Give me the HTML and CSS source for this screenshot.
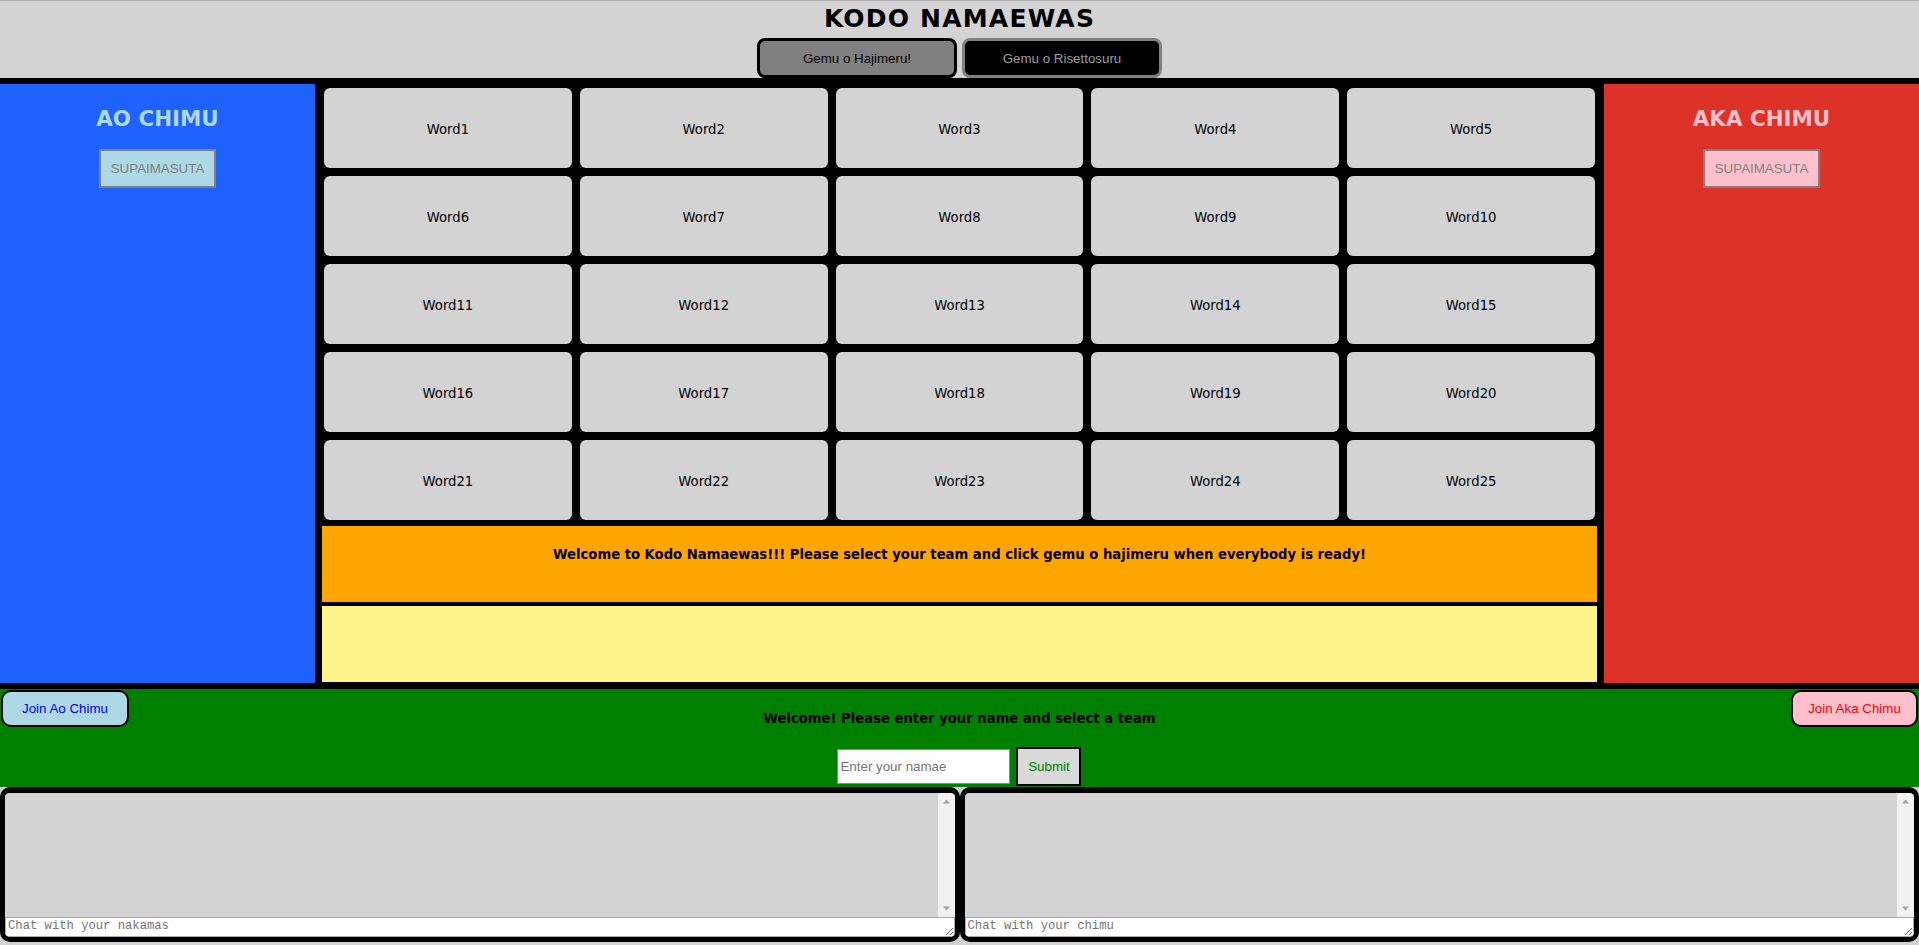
FILE: index.html
```html
<!DOCTYPE html>
<html lang="en">
<head>
<meta charset="utf-8">
<title>Kodo Namaewas</title>
<link rel="stylesheet" href="styles.css">
</head>
<body>
<header class="top-bar">
  <h1 class="title">KODO NAMAEWAS</h1>
  <div class="game-controls">
    <button class="ctrl-btn ctrl-start">Gemu o Hajimeru!</button>
    <button class="ctrl-btn ctrl-reset">Gemu o Risettosuru</button>
  </div>
</header>

<main class="board-area">
  <aside class="team team-blue">
    <h2 class="team-name">AO CHIMU</h2>
    <button class="spymaster">SUPAIMASUTA</button>
  </aside>

  <section class="center-col">
    <div class="word-grid">
      <div class="card">Word1</div>
      <div class="card">Word2</div>
      <div class="card">Word3</div>
      <div class="card">Word4</div>
      <div class="card">Word5</div>
      <div class="card">Word6</div>
      <div class="card">Word7</div>
      <div class="card">Word8</div>
      <div class="card">Word9</div>
      <div class="card">Word10</div>
      <div class="card">Word11</div>
      <div class="card">Word12</div>
      <div class="card">Word13</div>
      <div class="card">Word14</div>
      <div class="card">Word15</div>
      <div class="card">Word16</div>
      <div class="card">Word17</div>
      <div class="card">Word18</div>
      <div class="card">Word19</div>
      <div class="card">Word20</div>
      <div class="card">Word21</div>
      <div class="card">Word22</div>
      <div class="card">Word23</div>
      <div class="card">Word24</div>
      <div class="card">Word25</div>
    </div>
    <div class="message-box">Welcome to Kodo Namaewas!!! Please select your team and click gemu o hajimeru when everybody is ready!</div>
    <div class="log-box"></div>
  </section>

  <aside class="team team-red">
    <h2 class="team-name">AKA CHIMU</h2>
    <button class="spymaster">SUPAIMASUTA</button>
  </aside>
</main>

<section class="join-bar">
  <button class="join-btn join-blue">Join Ao Chimu</button>
  <div class="join-center">
    <h4 class="join-title">Welcome! Please enter your name and select a team</h4>
    <form class="name-form">
      <input class="name-input" type="text" placeholder="Enter your namae">
      <button class="submit-btn" type="button">Submit</button>
    </form>
  </div>
  <button class="join-btn join-red">Join Aka Chimu</button>
</section>

<section class="chats">
  <div class="chat-box">
    <div class="chat-log">
      <div class="chat-messages"></div>
      <div class="scroll-rail" aria-hidden="true">
        <svg width="17" height="17" viewBox="0 0 17 17"><path d="M5 10.5h7L8.5 6.5z" fill="#a3a3a3"/></svg>
        <svg width="17" height="17" viewBox="0 0 17 17"><path d="M5 6.5h7L8.5 10.5z" fill="#a3a3a3"/></svg>
      </div>
    </div>
    <textarea class="chat-input" rows="1" placeholder="Chat with your nakamas"></textarea>
  </div>
  <div class="chat-box">
    <div class="chat-log">
      <div class="chat-messages"></div>
      <div class="scroll-rail" aria-hidden="true">
        <svg width="17" height="17" viewBox="0 0 17 17"><path d="M5 10.5h7L8.5 6.5z" fill="#a3a3a3"/></svg>
        <svg width="17" height="17" viewBox="0 0 17 17"><path d="M5 6.5h7L8.5 10.5z" fill="#a3a3a3"/></svg>
      </div>
    </div>
    <textarea class="chat-input" rows="1" placeholder="Chat with your chimu"></textarea>
  </div>
</section>
</body>
</html>
```

FILE: styles.css
```css
* {
  box-sizing: border-box;
}

html, body {
  margin: 0;
  padding: 0;
}

body {
  background: #d3d3d3;
  font-family: "DejaVu Sans", sans-serif;
  overflow: hidden;
}

/* Header */
.top-bar {
  background: #d3d3d3;
  border-top: 1px solid #a9a9a9;
  padding-top: 4px;
  display: flex;
  flex-direction: column;
  align-items: center;
}

.title {
  margin: 0;
  font-size: 25px;
  line-height: 28px;
  font-weight: bold;
  letter-spacing: 1.2px;
  color: #000;
}

.game-controls {
  margin-top: 5px;
  display: flex;
  gap: 5px;
}

.ctrl-btn {
  width: 200px;
  height: 40px;
  border: 3px solid;
  border-radius: 8px;
  font-family: "Liberation Sans", Arial, sans-serif;
  font-size: 13.33px;
  padding: 0;
}

.ctrl-start {
  background: #808080;
  border-color: #000;
  color: #000;
}

.ctrl-reset {
  background: #000;
  border-color: #808080;
  color: #9a9a9a;
}

/* Board */
.board-area {
  background: #000;
  padding: 6px 0;
  display: flex;
}

.team {
  width: 315px;
  flex: none;
  height: 599px;
  display: flex;
  flex-direction: column;
  align-items: center;
  padding-top: 22px;
}

.team-blue {
  background: #1e63ff;
}

.team-red {
  background: #dd3227;
}

.team-name {
  margin: 0 0 17px;
  font-size: 21.4px;
  line-height: 26px;
  font-weight: bold;
}

.team-blue .team-name {
  color: #add8e6;
}

.team-red .team-name {
  color: #ffc0cb;
}

.spymaster {
  border: 2px solid #808080;
  padding: 10px;
  font-family: "Liberation Sans", Arial, sans-serif;
  font-size: 13.33px;
  line-height: 15px;
  color: #808080;
}

.team-blue .spymaster {
  background: #add8e6;
}

.team-red .spymaster {
  background: #ffc0cb;
}

.center-col {
  flex: 1;
  padding: 4px 7px 1px;
  display: flex;
  flex-direction: column;
}

.word-grid {
  padding: 0 2px;
  display: grid;
  grid-template-columns: repeat(5, 1fr);
  grid-auto-rows: 80px;
  gap: 8px;
}

.card {
  background: #d3d3d3;
  border-radius: 6px;
  display: flex;
  align-items: center;
  justify-content: center;
  padding-top: 2px;
  font-size: 13.2px;
  color: #000;
}

.message-box {
  margin-top: 6px;
  height: 76px;
  background: #ffa500;
  padding-top: 21px;
  text-align: center;
  font-weight: bold;
  font-size: 13.2px;
  line-height: 16px;
  color: #000;
}

.log-box {
  margin-top: 4px;
  height: 76px;
  background: #fff38c;
}

/* Join bar */
.join-bar {
  background: #008000;
  padding: 1px;
  display: grid;
  grid-template-columns: 1fr auto 1fr;
  align-items: start;
}

.join-btn {
  width: 128px;
  height: 37px;
  border: 2px solid #000;
  border-radius: 10px;
  font-family: "Liberation Sans", Arial, sans-serif;
  font-size: 13.33px;
  padding: 0;
}

.join-blue {
  justify-self: start;
  background: #add8e6;
  color: #0000ff;
}

.join-red {
  justify-self: end;
  width: 127px;
  background: #ffc0cb;
  color: #ff0000;
}

.join-center {
  padding-top: 21px;
  display: flex;
  flex-direction: column;
  align-items: center;
}

.join-title {
  margin: 0;
  font-size: 13.2px;
  line-height: 16px;
  font-weight: bold;
  color: #000;
}

.name-form {
  margin: 20px 0 0;
  height: 39px;
  display: flex;
  align-items: center;
  gap: 6px;
}

.name-input {
  width: 173px;
  height: 35px;
  border: 1px solid #8a8a8a;
  padding: 0 2px;
  font-family: "Liberation Sans", Arial, sans-serif;
  font-size: 13.33px;
  background: #fff;
}

.submit-btn {
  width: 65px;
  height: 39px;
  border: 2px solid #000;
  background: #d9d9d9;
  color: #008000;
  font-family: "Liberation Sans", Arial, sans-serif;
  font-size: 13.33px;
  padding: 0;
}

/* Chats */
.chats {
  display: flex;
}

.chat-box {
  flex: 1;
  border: 5px solid #000;
  border-top-width: 6px;
  border-radius: 10px;
  overflow: hidden;
  display: flex;
  flex-direction: column;
}

.chat-log {
  height: 124px;
  background: #d3d3d3;
  display: flex;
}

.chat-messages {
  flex: 1;
}

.scroll-rail {
  width: 17px;
  background: #f1f1f1;
  display: flex;
  flex-direction: column;
  justify-content: space-between;
}

.scroll-rail svg {
  display: block;
}

.chat-input {
  display: block;
  width: 100%;
  height: 20px;
  margin: 0;
  border: 1px solid #a9a9a9;
  padding: 1px 2px;
  font-family: "Liberation Mono", monospace;
  font-size: 12.2px;
  line-height: 15px;
  background: #fff;
  resize: vertical;
}
```
